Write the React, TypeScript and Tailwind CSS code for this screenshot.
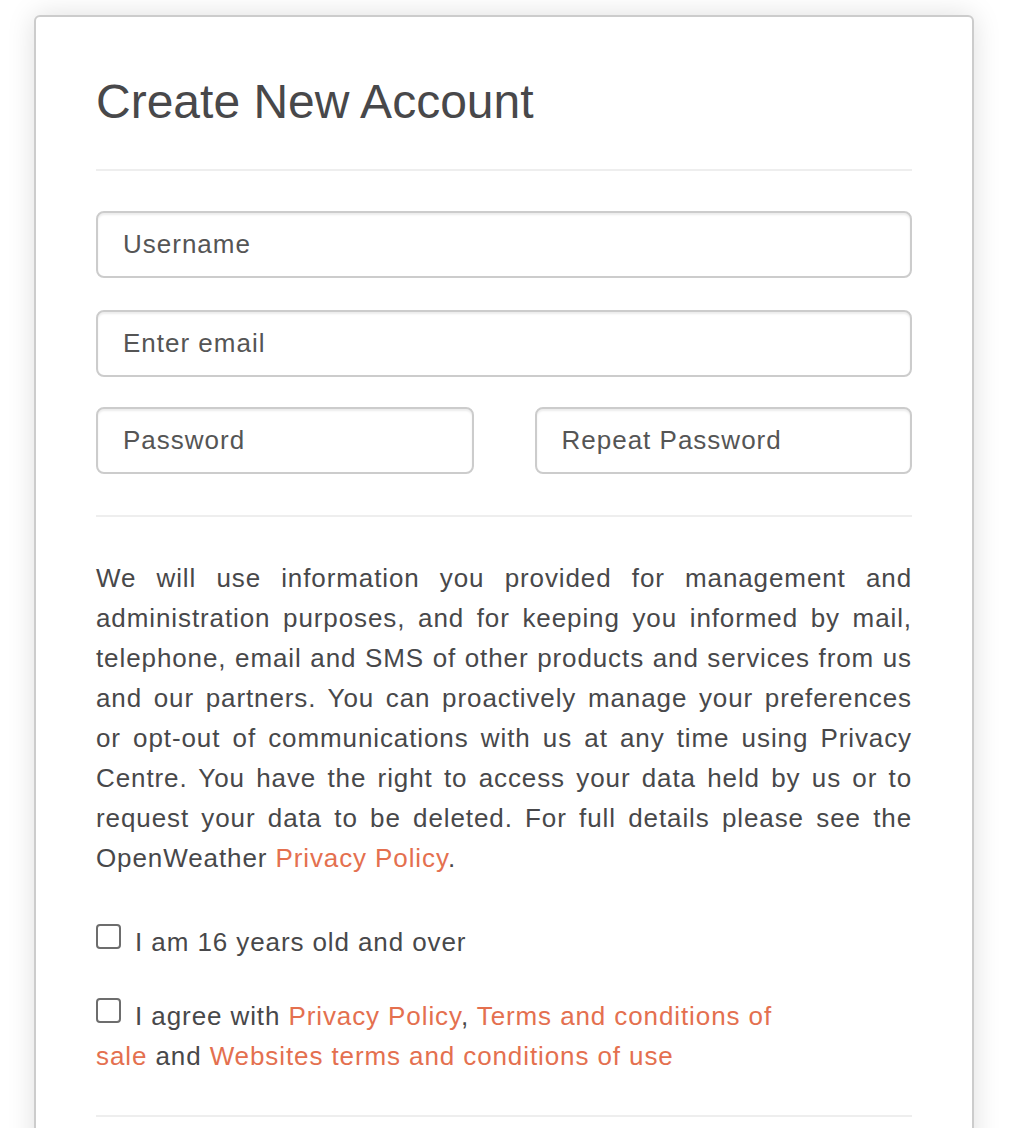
import React from "react";

const font = { fontFamily: '"Liberation Sans", Arial, Helvetica, sans-serif' };

const lines = [
  "We will use information you provided for management and",
  "administration purposes, and for keeping you informed by mail,",
  "telephone, email and SMS of other products and services from us",
  "and our partners. You can proactively manage your preferences",
  "or opt-out of communications with us at any time using Privacy",
  "Centre. You have the right to access your data held by us or to",
  "request your data to be deleted. For full details please see the",
];

function Field({ placeholder, type = "text" }: { placeholder: string; type?: string }) {
  return (
    <input
      type={type}
      placeholder={placeholder}
      className="block w-full h-[67px] rounded-[8px] border-2 border-[#cccccc] bg-white px-[25px] text-[26px] tracking-[1px] text-[#555555] placeholder:text-[#555555] shadow-[inset_0_2px_2px_rgba(0,0,0,0.075)] outline-none"
    />
  );
}

function Check() {
  return (
    <span className="inline-block w-[25px] h-[25px] rounded-[4px] border-2 border-[#6d6d6d] bg-white align-[2px] mr-[6px]" />
  );
}

export default function App() {
  return (
    <div className="min-h-screen bg-white overflow-hidden pl-[34px] pt-[15px]" style={font}>
      {/* Card */}
      <div className="w-[940px] rounded-[6px] border-2 border-[#cccccc] bg-white px-[60px] pt-[58px] pb-[60px] shadow-[0_0_28px_rgba(0,0,0,0.13)] text-[#48484a]">
        <h2 className="text-[48px] leading-[53px] font-normal">Create New Account</h2>

        <hr className="mt-[41px] border-0 border-t-2 border-[#eeeeee]" />

        {/* Inputs */}
        <div className="mt-[40px]">
          <Field placeholder="Username" />
          <div className="mt-[32px]">
            <Field placeholder="Enter email" type="email" />
          </div>
          <div className="mt-[30px] grid grid-cols-2 gap-[61px]">
            <Field placeholder="Password" type="password" />
            <Field placeholder="Repeat Password" type="password" />
          </div>
        </div>

        <hr className="mt-[41px] border-0 border-t-2 border-[#eeeeee]" />

        <p className="mt-[41px] text-[26px] leading-[40px] tracking-[0.9px]">
          {lines.map((l) => (
            <span key={l} className="block text-justify [text-align-last:justify]">
              {l}
            </span>
          ))}
          <span className="block">
            OpenWeather <a className="text-[#e4704f]">Privacy Policy</a>.
          </span>
        </p>

        {/* Checkboxes */}
        <div className="mt-[44px] text-[26px] leading-[40px] tracking-[0.9px]">
          <label className="block">
            <Check /> I am 16 years old and over
          </label>
          <label className="block mt-[34px]">
            <Check /> I agree with <a className="text-[#e4704f]">Privacy Policy</a>,{" "}
            <a className="text-[#e4704f]">Terms and conditions of</a>
            <br />
            <a className="text-[#e4704f]">sale</a> and{" "}
            <a className="text-[#e4704f]">Websites terms and conditions of use</a>
          </label>
        </div>

        <hr className="mt-[39px] border-0 border-t-2 border-[#eeeeee]" />
        <div className="h-[40px]" />
      </div>
    </div>
  );
}
